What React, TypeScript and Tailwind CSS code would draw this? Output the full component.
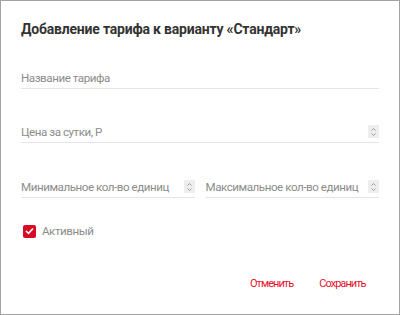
import React from "react";

function Spinner() {
  return (
    <div className="w-[11px] h-[13px] bg-[#eeeeee] flex items-center justify-center shrink-0">
      <svg width="7" height="10" viewBox="0 0 7 10" fill="none">
        <path d="M1.5 3.5 L3.5 1.5 L5.5 3.5" stroke="#9a9a9a" strokeWidth="1" />
        <path d="M1.5 6.5 L3.5 8.5 L5.5 6.5" stroke="#9a9a9a" strokeWidth="1" />
      </svg>
    </div>
  );
}

function Field({ label, spinner }: { label: string; spinner?: boolean }) {
  return (
    <div className="h-[22px] border-b border-[#e4e4e4] flex items-center justify-between">
      <span className="text-[11.6px] leading-[16px] tracking-[-0.45px] text-[#8c8c8c] whitespace-nowrap">
        {label}
      </span>
      {spinner && <Spinner />}
    </div>
  );
}

export default function App() {
  return (
    <div
      className="w-[400px] h-[315px] border border-[#a3a3a3] bg-white px-[20px] flex flex-col"
      style={{ fontFamily: "Roboto, 'Liberation Sans', sans-serif" }}
    >
      <div className="pt-[18px] text-[14px] leading-[20px] font-bold tracking-[-0.2px] text-[#333333] whitespace-nowrap">
        Добавление тарифа к варианту «Стандарт»
      </div>
      <div className="mt-[28px]">
        <Field label="Название тарифа" />
      </div>
      <div className="mt-[32px]">
        <Field label="Цена за сутки, Р" spinner />
      </div>
      <div className="mt-[33px] grid grid-cols-2 gap-[11px]">
        <Field label="Минимальное кол-во единиц" spinner />
        <Field label="Максимальное кол-во единиц" spinner />
      </div>
      <div className="mt-[26px] flex items-center h-[14px] pl-[2px]">
        <div className="w-[13px] h-[13px] rounded-[2px] bg-[#d90b24] flex items-center justify-center">
          <svg width="9" height="8" viewBox="0 0 9 8" fill="none">
            <path d="M1 4 L3.5 6.3 L8 1.5" stroke="#ffffff" strokeWidth="1.6" />
          </svg>
        </div>
        <span className="ml-[6px] text-[11.6px] leading-[16px] tracking-[-0.45px] text-[#8c8c8c]">Активный</span>
      </div>
      <div className="mt-[38px] flex pl-[229px] gap-[26px]">
        <span className="text-[11px] leading-[16px] tracking-[-0.95px] text-[#e8112d] whitespace-nowrap">Отменить</span>
        <span className="text-[11px] leading-[16px] tracking-[-0.95px] text-[#e8112d] whitespace-nowrap">Сохранить</span>
      </div>
    </div>
  );
}
